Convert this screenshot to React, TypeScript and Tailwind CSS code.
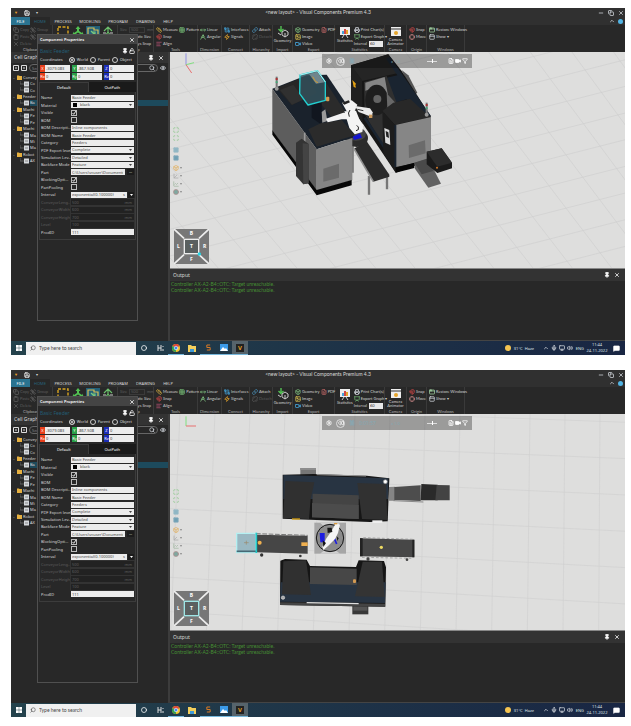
import React, { useId } from "react";
import {
  Circle, Copy, Clipboard, X, Group, Ruler, Magnet, AlignLeft, Grid3x3, MoveHorizontal,
  DraftingCompass, Cable, Zap, Link, Unlink, Box, Image as ImageIcon, Video, FileText, Printer, Presentation,
  Crosshair, AppWindow, PanelTop, Pin, Search, Eye, Settings, Rewind, Pause, Funnel, Save, Minus, ChevronUp,
  Monitor, Volume2, MessageSquare, Unlock, Maximize, Scan, Square, Axis3d, LineChart, Mic,
} from "lucide-react";

type Icon = React.ComponentType<{ className?: string; strokeWidth?: number }>;

function Glyph({ icon: I, className = "text-gray-300" }: { icon: Icon; className?: string }) {
  return <I className={`size-[6px] shrink-0 ${className}`} strokeWidth={3} />;
}

function Tool({ icon, label, tint, dim }: { icon: Icon; label: string; tint?: string; dim?: boolean }) {
  return (
    <button className={`flex h-[7px] items-center gap-px whitespace-nowrap ${dim ? "text-[#5c5c5c]" : "text-[#d0d0d0]"}`}>
      <Glyph icon={icon} className={dim ? "text-[#5c5c5c]" : tint} />
      {label}
    </button>
  );
}

function RibbonGroup({ label, width, children }: { label: string; width: string; children: React.ReactNode }) {
  return (
    <section className={`flex shrink-0 flex-col border-r border-[#3a3a3a] pt-px ${width}`}>
      <div className="flex h-[21px] gap-px px-[2px]">{children}</div>
      <div className="text-center leading-[5px] text-[#b0b0b0]">{label}</div>
    </section>
  );
}

const Col = ({ children, className = "" }: { children: React.ReactNode; className?: string }) => (
  <div className={`flex flex-col ${className}`}>{children}</div>
);

function Ribbon() {
  const id = useId();
  return (
    <div className="flex h-[27px] overflow-hidden bg-[#282828] font-[Lato,'Noto_Sans',sans-serif]">
      <RibbonGroup label="Clipboard" width="w-[42px]">
        <Col className="w-[16px]">
          <Tool icon={Copy} label="Copy" dim />
          <Tool icon={Clipboard} label="Paste" dim />
          <Tool icon={X} label="Delete" dim />
        </Col>
        <Col>
          <Tool icon={Group} label="Group" dim />
          <Tool icon={Group} label="" dim />
        </Col>
      </RibbonGroup>
      <RibbonGroup label="" width="w-[65px]">
        <button aria-label="Select" className="flex w-[16px] justify-center">
          <svg viewBox="0 0 12 12" className="size-[12px]"><rect x="1" y="1" width="10" height="10" fill="none" stroke="#d9a520" strokeWidth="1.4" strokeDasharray="3 1.5" /></svg>
        </button>
        <button aria-label="Move" className="flex w-[15px] justify-center">
          <svg viewBox="0 0 12 12" className="size-[12px]" fill="#52c152"><path d="M6 0 8.500 3H7V5L10 7V5.500L12 9 9 10V8.500L6 6.500 3 8.500V10L0 9 2 5.500V7L5 5V3H3.500Z" /></svg>
        </button>
        <button aria-label="PnP" className="flex h-[20px] w-[14px] justify-center bg-[#23617a]">
          <svg viewBox="0 0 12 12" className="size-[12px]" fill="none" strokeWidth="1.200"><path d="M1 2H7V4H11V10H1Z" stroke="#d7bd55" /><path d="M5 6H8V9M8 9 4 5" stroke="#7cc77c" /></svg>
        </button>
        <button aria-label="Interact" className="flex w-[15px] justify-center">
          <svg viewBox="0 0 12 12" className="size-[12px]" fill="none" strokeWidth="1.200"><path d="M2 5 6 1 10 5M6 2V6L3 10M6 6 9 10" stroke="#6cbf6c" /><path d="M1 7H4M8 7H11" stroke="#ccc" /></svg>
        </button>
      </RibbonGroup>
      <RibbonGroup label="Snap" width="w-[36px]">
        <Col className="w-full text-[#d0d0d0]">
          <label className="flex h-[7px] items-center gap-[2px] text-[#5c5c5c]">
            Size
            <input className="h-[6px] w-[16px] border border-[#3a3a3a] px-px" defaultValue="500" />
            mm
          </label>
          <button className="h-[7px] whitespace-nowrap text-right leading-[7px]">Automatic Size</button>
          <button className="h-[7px] whitespace-nowrap text-right leading-[7px]">Always Snap</button>
        </Col>
      </RibbonGroup>
      <RibbonGroup label="Tools" width="w-[44px]">
        <Col>
          <Tool icon={Ruler} label="Measure" tint="text-[#d9b040]" />
          <Tool icon={Magnet} label="Snap" tint="text-[#d04848]" />
          <Tool icon={AlignLeft} label="Align" tint="text-[#b05070]" />
        </Col>
        <Tool icon={Grid3x3} label="Pattern" tint="text-[#6fae6f]" />
      </RibbonGroup>
      <RibbonGroup label="Dimension" width="w-[24px]">
        <Col>
          <Tool icon={MoveHorizontal} label="Linear" tint="text-[#7fbf7f]" />
          <Tool icon={DraftingCompass} label="Angular" tint="text-[#7fbf7f]" />
        </Col>
      </RibbonGroup>
      <RibbonGroup label="Connect" width="w-[28px]">
        <Col>
          <Tool icon={Cable} label="Interfaces" tint="text-[#45a5dc]" />
          <Tool icon={Zap} label="Signals" tint="text-[#e5a52c]" />
        </Col>
      </RibbonGroup>
      <RibbonGroup label="Hierarchy" width="w-[23px]">
        <Col>
          <Tool icon={Link} label="Attach" tint="text-[#4c91ba]" />
          <Tool icon={Unlink} label="Detach" dim />
        </Col>
      </RibbonGroup>
      <RibbonGroup label="Import" width="w-[20px]">
        <button className="flex w-full flex-col items-center text-[#d0d0d0]">
          <svg viewBox="0 0 12 12" className="size-[12px]" fill="none"><path d="M4 0V5M1.500 3 4 5.500 6.500 3" stroke="#54c254" strokeWidth="1.400" /><path d="M5 6 8 4 11 6V9L8 11 5 9ZM1 7 4 9M8 7V11" stroke="#ccc" /></svg>
          Geometry
        </button>
      </RibbonGroup>
      <RibbonGroup label="Export" width="w-[42px]">
        <Col>
          <Tool icon={Box} label="Geometry" tint="text-[#7fbf7f]" />
          <Tool icon={ImageIcon} label="Image" tint="text-[#d8c050]" />
          <Tool icon={Video} label="Video" tint="text-[#45a5dc]" />
        </Col>
        <Tool icon={FileText} label="PDF" tint="text-[#b06060]" />
      </RibbonGroup>
      <RibbonGroup label="Statistics" width="w-[50px]">
        <button className="flex w-[16px] flex-col items-center text-[#d0d0d0]">
          <svg viewBox="0 0 12 12" className="size-[12px]"><path d="M1 1H11V9H1Z" fill="#eee" /><path d="M3 5H5V8H3Z" fill="#45a5dc" /><path d="M5 3H7V8H5Z" fill="#d04848" /><path d="M7 4H9V8H7Z" fill="#e5a52c" /><path d="M3 12 5 9M9 12 7 9" stroke="#ccc" /></svg>
          Statistics
        </button>
        <Col>
          <Tool icon={Printer} label="Print Chart(s)" />
          <Tool icon={Presentation} label="Export Graph ▾" tint="text-[#6fae6f]" />
          <div className="flex h-[7px] items-center gap-[2px] text-[#d0d0d0]">
            <label htmlFor={id}>Interval</label>
            <input id={id} className="h-[6px] w-[14px] bg-[#e8e8e8] px-px text-[#333]" defaultValue="60" />
          </div>
        </Col>
      </RibbonGroup>
      <RibbonGroup label="Camera" width="w-[22px]">
        <button className="flex w-full flex-col items-center leading-[4px] text-[#d0d0d0]">
          <svg viewBox="0 0 12 12" className="size-[12px] shrink-0"><path d="M1 1H11V10H1Z" fill="#eee" /><path d="M1 3H11" stroke="#333" /><circle cx="6" cy="7" r="2" fill="#e5a52c" /></svg>
          Camera Animator
        </button>
      </RibbonGroup>
      <RibbonGroup label="Origin" width="w-[20px]">
        <Col>
          <Tool icon={Magnet} label="Snap" tint="text-[#d04848]" />
          <Tool icon={Crosshair} label="Move" tint="text-[#c08080]" />
        </Col>
      </RibbonGroup>
      <RibbonGroup label="Windows" width="w-[38px]">
        <Col>
          <Tool icon={AppWindow} label="Restore Windows" tint="text-[#9fcf9f]" />
          <Tool icon={PanelTop} label="Show ▾" />
        </Col>
      </RibbonGroup>
    </div>
  );
}

type TreeRow = { name: string; folder?: boolean; selected?: boolean };
const tree: TreeRow[] = [
  { name: "Convey", folder: true },
  { name: "Co" },
  { name: "Co" },
  { name: "Feeder", folder: true },
  { name: "Ba", selected: true },
  { name: "Machi", folder: true },
  { name: "Pe" },
  { name: "Pe" },
  { name: "Machi", folder: true },
  { name: "Ma" },
  { name: "Mi" },
  { name: "Ma" },
  { name: "Robot", folder: true },
  { name: "AX" },
];

function CellGraph() {
  return (
    <aside className="flex w-[157px] shrink-0 flex-col bg-[#282828] text-[#d8d8d8]">
      <header className="flex h-[11px] items-center bg-[#333] pl-[3px] pr-[4px]">
        <h2 className="text-[5px] leading-[7px]">Cell Graph</h2>
        <button aria-label="Pin" className="ml-auto mr-[4px]"><Glyph icon={Pin} className="fill-white text-white" /></button>
        <button aria-label="Close"><Glyph icon={X} className="text-white" /></button>
      </header>
      <div className="flex h-[10px] items-center gap-[2px] px-[2px]">
        <button aria-label="Collapse all"><svg viewBox="0 0 6 6" className="size-[6px]" fill="none" stroke="#ddd"><path d="M0.500 0.500H5.500V5.500H0.500ZM2 3H4" /></svg></button>
        <button aria-label="Expand all"><svg viewBox="0 0 6 6" className="size-[6px]" fill="none" stroke="#ddd"><path d="M0.500 0.500H5.500V5.500H0.500ZM2 3H4" /></svg></button>
        <div className="flex h-[8px] flex-1 items-center rounded-full border border-[#666] px-[2px]">
          <input aria-label="Search" placeholder="Sea" className="h-[6px] w-full min-w-0" />
          <Glyph icon={Search} />
        </div>
        <Glyph icon={Eye} />
      </div>
      <ul className="mt-px grid h-[90px] auto-rows-fr">
        {tree.map((row, i) => (
          <li key={i} className={`flex items-center gap-px ${row.folder ? "pl-px" : "pl-[9px]"}`}>
            {row.folder && <span className="w-[4px] text-center">-</span>}
            {row.folder ? (
              <svg viewBox="0 0 5 5" className="size-[5px] shrink-0"><path d="M0 0.500H2L2.500 1H5V5H0Z" fill="#e6b040" /></svg>
            ) : (
              <svg viewBox="0 0 9 6" className="h-[6px] w-[9px] shrink-0"><path d="M0 -1V3H4" fill="none" stroke="#777" strokeWidth="0.700" /><rect x="4" y="0.500" width="5" height="5" fill="#d5d8dc" /><path d="M5 3H8" stroke="#888" /></svg>
            )}
            <span className={`flex h-full items-center ${row.selected ? "flex-1 bg-[#1d4a5c]" : ""}`}>{row.name}</span>
          </li>
        ))}
      </ul>
    </aside>
  );
}

type Prop = { label: string; value?: string; kind?: "text" | "select" | "check" | "off" | "file" | "expr"; on?: boolean; unit?: string };
const properties: Prop[] = [
  { label: "Name", value: "Basic Feeder" },
  { label: "Material", value: "black", kind: "select" },
  { label: "Visible", kind: "check", on: true },
  { label: "BOM", kind: "check" },
  { label: "BOM Descripti...", value: "Inline components" },
  { label: "BOM Name", value: "Basic Feeder" },
  { label: "Category", value: "Feeders" },
  { label: "PDF Export level", value: "Complete", kind: "select" },
  { label: "Simulation Lev...", value: "Detailed", kind: "select" },
  { label: "Backface Mode", value: "Feature", kind: "select" },
  { label: "Part", value: "C:\\Users\\vcuser\\Documents\\Vi", kind: "file" },
  { label: "BlockingOpti...", kind: "check", on: true },
  { label: "PartPooling", kind: "check" },
  { label: "Interval", value: "exponential(0.100000)", kind: "expr" },
  { label: "ConveyorLeng...", value: "500", kind: "off", unit: "mm" },
  { label: "ConveyorWidth", value: "600", kind: "off", unit: "mm" },
  { label: "ConveyorHeight", value: "700", kind: "off", unit: "mm" },
  { label: "Level", value: "100", kind: "off" },
  { label: "ProdID", value: "111" },
];

function PropertyRow({ prop }: { prop: Prop }) {
  const id = useId();
  const kind = prop.kind ?? "text";
  const off = kind === "off";
  return (
    <div className="flex min-w-0 items-center">
      <label htmlFor={id} className={`w-[30px] shrink-0 whitespace-nowrap ${off ? "text-[#5e5e5e]" : "text-[#d8d8d8]"}`}>{prop.label}</label>
      {kind === "check" && (
        <span className="grid size-[6px]">
          <input id={id} type="checkbox" defaultChecked={prop.on} className="peer col-start-1 row-start-1 size-[6px] appearance-none border border-[#bbb]" />
          <svg viewBox="0 0 6 6" className="pointer-events-none invisible col-start-1 row-start-1 size-[6px] peer-checked:visible"><path d="M1.500 3 2.700 4.300 5 1" fill="none" stroke="#fff" strokeWidth="0.900" /></svg>
        </span>
      )}
      {kind === "select" && (
        <div className="flex h-[6px] min-w-0 flex-1 items-center bg-[#ececec] pr-[2px] text-[#444]">
          {prop.label === "Material" && <span className="mx-[2px] size-[4px] shrink-0 bg-black" />}
          <select id={id} className="h-[6px] w-full min-w-0 flex-1 appearance-none pl-px leading-[6px]">
            <option>{prop.value}</option>
          </select>
          <svg viewBox="0 0 3 2" className="h-[2px] w-[3px] shrink-0"><path d="M0 0H3L1.500 2Z" fill="#444" /></svg>
        </div>
      )}
      {(kind === "text" || off || kind === "file" || kind === "expr") && (
        <div className={`flex h-[6px] min-w-0 flex-1 items-center pr-[2px] ${off ? "bg-[#222] text-[#5e5e5e] outline outline-[#333]" : "bg-[#ececec] text-[#444]"}`}>
          <input id={id} disabled={off} defaultValue={prop.value} className="h-[6px] w-full min-w-0 flex-1 pl-px" />
          {prop.unit}
          {kind === "expr" && "s"}
        </div>
      )}
      {kind === "file" && <button aria-label="Browse" className="ml-[2px] h-[6px] w-[7px] shrink-0 bg-[#1c1c1c] leading-[4px] text-white">...</button>}
      {kind === "expr" && <button aria-label="Expression" className="ml-px flex size-[6px] shrink-0 items-center justify-center bg-[#1c1c1c]"><svg viewBox="0 0 3 2" className="h-[2px] w-[3px]"><path d="M0 0H3L1.500 2Z" fill="#fff" /></svg></button>}
    </div>
  );
}

function Coord({ axis, value, color }: { axis: string; value: string; color: string }) {
  return (
    <label className="flex h-[7px] min-w-0 items-center bg-[#ececec]">
      <span className={`h-full w-[5px] shrink-0 text-center leading-[7px] text-white ${color}`}>{axis}</span>
      <input defaultValue={value} className="h-[6px] w-full min-w-0 pl-px text-[#444]" />
    </label>
  );
}

function ComponentProperties() {
  const group = useId();
  return (
    <div role="dialog" aria-label="Component Properties" className="absolute left-[26px] top-[26px] h-[287px] w-[101px] border border-[#505050] bg-[#282828] text-[#d8d8d8]">
      <header className="flex h-[9px] items-center justify-between bg-[#444] px-[2px]">
        <h2 className="text-[4px] font-semibold text-white">Component Properties</h2>
        <button aria-label="Close"><Glyph icon={X} className="text-white" /></button>
      </header>
      <div className="flex flex-col px-px pt-[3px]">
        <div className="flex h-[8px] items-center gap-px px-px">
          <h3 className="flex-1 text-[5px] leading-[8px] text-[#235c74]">Basic Feeder</h3>
          <Glyph icon={Pin} className="fill-white text-white" />
          <Glyph icon={Unlock} className="text-white" />
        </div>
        <div className="flex h-[9px] items-center justify-between pl-px pr-[4px]">
          <span className="w-[27px]">Coordinates</span>
          {["World", "Parent", "Object"].map((name, i) => (
            <label key={name} className="flex items-center gap-[2px]">
              <input type="radio" name={group} defaultChecked={i === 0} className="size-[6px] appearance-none rounded-full border border-[#ccc] checked:bg-[#ddd] checked:shadow-[inset_0_0_0_1px_#282828]" />
              {name}
            </label>
          ))}
        </div>
        <div className="mt-px grid grid-cols-3 gap-x-[2px] gap-y-px pl-px pr-[2px]">
          <Coord axis="X" value="-3079.083" color="bg-[#e8401c]" />
          <Coord axis="Y" value="-867.508" color="bg-[#2aa048]" />
          <Coord axis="Z" value="0" color="bg-[#1c2eb8]" />
          <Coord axis="Rx" value="0" color="bg-[#e8401c]" />
          <Coord axis="Ry" value="0" color="bg-[#2aa048]" />
          <Coord axis="Rz" value="0" color="bg-[#1c2eb8]" />
        </div>
        <div className="mt-[2px] flex h-[10px]">
          <button className="flex-1 border border-b-0 border-[#3c3c3c] text-white">Default</button>
          <button className="flex-1 bg-[#1a1a1a] text-white">OutPath</button>
        </div>
        <div className="border border-t-0 border-[#3c3c3c] pb-[3px] pl-px pr-px pt-[2px]">
          <div className="grid h-[142px] auto-rows-fr grid-cols-1">
            {properties.map((p) => <PropertyRow key={p.label} prop={p} />)}
          </div>
        </div>
      </div>
    </div>
  );
}

const Tower = ({ x, y }: { x: number; y: number }) => (
  <g>
    <rect x={x - 3} y={y} width="6" height="36" fill="#777" />
    <rect x={x - 3} y={y + 4} width="6" height="6" fill="#a33" />
    <rect x={x - 3} y={y + 14} width="6" height="5" fill="#4a7" />
    <circle cx={x} cy={y + 36} r="6" fill="#999" />
  </g>
);

function PerspectiveScene() {
  return (
    <svg viewBox="30 8 1365 648" preserveAspectRatio="xMinYMid slice" className="size-full bg-[#dededd]">
      <g stroke="#cfcfcf" strokeWidth="2">
        {Array.from({ length: 15 }, (_, i) => <path key={i} d={`M30 ${60 + i * 80}L1400 ${-290 + i * 80}`} />)}
        {Array.from({ length: 17 }, (_, i) => <path key={i} d={`M${-520 + i * 125} 0L${60 + i * 118} 660`} />)}
      </g>
      <path d="M78 46V12" stroke="#9090e0" strokeWidth="3" />
      <path d="M78 46 102 40" stroke="#80e080" strokeWidth="3" />
      <path d="M78 46 95 71" stroke="#e87070" strokeWidth="3" />

      <path d="M725 62 745 78 772 130 760 140Z" fill="#555" />
      <path d="M573 48 685 15 725 65 813 203V332L707 370 573 170Z" fill="#161616" />
      <path d="M573 48 685 15 712 72 606 95Z" fill="#252525" />
      <path d="M678 28 690 22 813 200 775 207 740 150 705 160 680 85 712 78Z" fill="#1a2430" />
      <path d="M573 48 606 92 608 225 573 170Z" fill="#202020" />
      <path d="M612 98 680 80 710 160 672 185 670 290 614 195Z" fill="#303030" />
      <path d="M616 100 674 83 684 138 655 112 616 124Z" fill="#858585" />
      <ellipse cx="650" cy="152" rx="34" ry="46" fill="#1e1e1e" />
      <circle cx="652" cy="149" r="12" fill="#636363" />
      <path d="M680 132 706 160 682 176Z" fill="#686868" />
      <path d="M614 205 704 340" stroke="#1a2430" strokeWidth="8" />
      <path d="M667 185 700 160 750 148 790 185 813 203 704 226Z" fill="#282828" />
      <path d="M667 185 704 226 707 368 670 312Z" fill="#1d1d1d" />
      <path d="M706 227 813 203V331L708 353Z" fill="#868686" />
      <path d="M706 227V353" stroke="#1a2430" strokeWidth="6" />
      <path d="M707 355 763 340V356L707 370Z" fill="#060606" />
      <path d="M673 236 688 242 691 287 676 280Z" fill="#ddd" />
      <path d="M677 245 685 249 687 266 679 262Z" fill="#222" />
      <path d="M746 288 795 273 797 312 747 326Z" fill="#6b6b6b" />
      <path d="M577 92 588 103 586 108 588 115 581 113Z" fill="#e5a214" />
      <Tower x={800} y={160} />
      <path d="M763 340 805 328 843 403 805 415 765 358Z" fill="#626262" />
      <path d="M763 340 800 328 820 365 785 375Z" fill="#4a4a4a" />
      <path d="M800 307 845 297 876 340V357L832 371 800 345Z" fill="#1b1b1b" />
      <path d="M800 307 845 297 876 340 832 352Z" fill="#2c2c2c" />
      <circle cx="831" cy="355" r="3" fill="#d27a2a" />

      <path d="M627 380V436M681 370V420M578 290V370" stroke="#777" strokeWidth="7" />
      <path d="M582 298 620 276 688 376V382L640 397Z" fill="#2b2b2b" />
      <path d="M582 298 640 397" stroke="#909090" strokeWidth="5" />
      <ellipse cx="590" cy="266" rx="34" ry="27" fill="#2b2b2b" />
      <ellipse cx="588" cy="254" rx="30" ry="20" fill="#444" />

      <path d="M337 118 440 78 500 76 600 225 578 265 470 300Z" fill="#1a222c" />
      <path d="M337 118 470 300V424L337 244Z" fill="#5d5d5d" />
      <path d="M470 300 577 266V393L470 424Z" fill="#858585" />
      <path d="M337 243 470 422 575 392V408L470 438 337 256Z" fill="#080808" />
      <path d="M350 116 435 82 470 130 395 168Z" fill="#262626" />
      <path d="M360 122 400 106 432 150 396 166Z" fill="#303030" />
      <path d="M495 95 556 188 520 210 480 160Z" fill="#2b2b2b" />
      <path d="M455 165 485 160V226L455 205Z" fill="#11161f" />
      <path d="M485 188 496 180 502 215 487 220Z" fill="#9a9a9a" />
      <path d="M445 240 482 222 545 212 585 258 470 292Z" fill="#2b2b2b" />
      <path d="M434 250V280" stroke="#999" strokeWidth="5" />
      <path d="M408 280 425 268 446 284V402L430 405 408 380Z" fill="#343434" />
      <path d="M428 282 446 284V402L430 405Z" fill="#444" />
      <path d="M490 358 537 343V385L490 397Z" fill="#6b6b6b" />
      <Tower x={350} y={82} />

      <path d="M420 77 472 64 496 98V153L444 167 419 133Z" fill="#34505a" fillOpacity=".85" stroke="#22cfd0" strokeWidth="4" strokeLinejoin="round" />
      <path d="M447 74 472 67 493 99 468 103Z" fill="#6f858d" />
      <path d="M458 82 466 96 474 100" stroke="#d09a30" strokeWidth="3" fill="none" />
      <path d="M420 77 472 64 496 98" stroke="#b7eef0" strokeWidth="3" fill="none" />
      <rect x="498" y="142" width="10" height="14" rx="3" fill="#d39a52" />

      <path d="M578 262 600 252 606 265 582 272Z" fill="#1414d0" />
      <path d="M498 208 550 190 578 194 584 210 545 210 503 219Z" fill="#f2f2f2" />
      <path d="M546 160 575 153 592 166 583 188 560 186Z" fill="#f4f4f4" />
      <path d="M546 160 566 153 570 159 553 166Z" fill="#222" />
      <path d="M585 170 630 177 638 189 636 202 622 198 596 188Z" fill="#ececec" />
      <path d="M553 186 588 184 598 210 610 228 607 248 584 255 568 236Z" fill="#f4f4f4" />
      <path d="M570 182Q562 190 568 202M590 228Q598 232 595 241L588 244" fill="none" stroke="#222" strokeWidth="3" />
      <path d="M592 180 610 184" stroke="#333" strokeWidth="3" />
      <rect x="627" y="196" width="10" height="10" fill="#c9975a" />
    </svg>
  );
}

function TopScene() {
  return (
    <svg viewBox="-270 -135 1365 648" preserveAspectRatio="xMinYMid slice" className="size-full bg-[#dededd]">
      <g stroke="#d0d0d0" strokeWidth="2">
        {Array.from({ length: 8 }, (_, i) => <path key={i} d={`M-270 ${-160 + i * 103}L1100 ${-110 + i * 109}`} />)}
        {Array.from({ length: 14 }, (_, i) => <path key={i} d={`M${-240 + i * 105} -140L${-268 + i * 107} 520`} />)}
      </g>
      <path d="M-222 -99V-128" stroke="#80e080" strokeWidth="3" />
      <path d="M-222 -99H-192" stroke="#e87070" strokeWidth="3" />

      <path d="M121 27H168V50H121Z" fill="#777" />
      <path d="M121 27H168V33H121Z" fill="#8c8c8c" />
      <path d="M160 45 320 50 388 58 383 187 330 189 68 179V47Z" fill="#161616" />
      <path d="M70 48 385 58 384 120H70Z" fill="#283442" />
      <path d="M170 47 318 51" stroke="#999" strokeWidth="3" />
      <path d="M158 104 296 109V180L156 175Z" fill="#444" />
      <path d="M156 132 296 138V180L156 175Z" fill="#4c4c4c" />
      <path d="M76 66 163 70 152 120 147 180 69 177Z" fill="#303030" />
      <path d="M292 72 378 75 382 183 306 180Z" fill="#313131" />
      <path d="M96 180H120" stroke="#d5a014" strokeWidth="4" />
      <circle cx="376" cy="68" r="6" fill="#fff" stroke="#888" strokeWidth="2" />
      <rect x="337" y="184" width="30" height="8" fill="#eee" />
      <path d="M387 84 405 83V125H387Z" fill="#858585" />
      <path d="M403 84 482 79V126L403 123Z" fill="#4d4d4d" />
      <path d="M484 75 533 77V124H482Z" fill="#2a2a2a" />
      <path d="M530 78 569 79V124H526Z" fill="#434343" />
      <path d="M400 125 490 129" stroke="#888" strokeWidth="3" />

      <path d="M-12 227 143 230V284L-12 280Z" fill="#464646" />
      <path d="M-12 224 143 229" stroke="#777" strokeWidth="3" strokeDasharray="14 5" />
      <circle cx="5" cy="288" r="5" fill="#333" /><circle cx="121" cy="291" r="4" fill="#333" />
      <circle cx="-1" cy="251" r="6" fill="#efb050" />
      <path d="M124 250H143V261H124Z" fill="#efb050" />
      <path d="M-70 223H-12V281H-70Z" fill="#9ab8c2" stroke="#b4f0f2" strokeWidth="4" />
      <path d="M-70 277H-12" stroke="#456975" strokeWidth="5" />
      <path d="M-11 221V282" stroke="#22c8c8" strokeWidth="5" />
      <path d="M-48 251H-34M-41 245V257" stroke="#9a8a6a" strokeWidth="2" />

      <path d="M163 191H258V284H163Z" fill="#a6a6a6" />
      <path d="M180 191H240L225 205H195ZM180 284H240L225 272H195Z" fill="#d0d0d0" />
      <circle cx="210" cy="237" r="41" fill="#8b8b8b" stroke="#151515" strokeWidth="3" />
      <path d="M179 222H194V250H181Z" fill="#1c1ce0" />
      <path d="M222 236 230 255" stroke="#1c1ce0" strokeWidth="5" />
      <path d="M228 192 240 197 234 222 225 240 205 260 190 273 187 263 198 240 215 215Z" fill="#f5f5f5" />
      <path d="M202 206 215 206 217 219 203 222ZM188 244 198 252 190 264ZM230 232 236 238 232 246Z" fill="#151515" />
      <path d="M222 194H232" stroke="#d99a40" strokeWidth="4" />

      <path d="M300 238 463 242V295L300 292Z" fill="#474747" />
      <path d="M300 238H308V292H300ZM457 242H463V295H457Z" fill="#222" />
      <path d="M310 236 460 241M306 295 460 298" stroke="#888" strokeWidth="2" strokeDasharray="8 6" />
      <circle cx="364" cy="265" r="5" fill="#eedb62" />
      <circle cx="324" cy="300" r="5" fill="#444" /><circle cx="441" cy="302" r="4" fill="#444" />

      <path d="M277 438H325V466H277Z" fill="#383838" />
      <path d="M280 440H322V455H280Z" fill="#555" />
      <path d="M61 305 75 300 140 302 150 321 288 324 296 304 372 306 378 325 376 443 60 438Z" fill="#151515" />
      <path d="M62 370H377L375 432 60 428Z" fill="#283442" />
      <path d="M150 325 290 329V378L150 375Z" fill="#474747" />
      <path d="M70 307 138 304 153 408 66 406Z" fill="#303030" />
      <path d="M308 308 366 308 374 414 285 412Z" fill="#343434" />
      <path d="M60 430 375 434V443L60 438Z" fill="#444" />
      <path d="M140 431 296 434" stroke="#ddd" strokeWidth="4" />
      <circle cx="69" cy="416" r="5" fill="#aaa" stroke="#ddd" strokeWidth="2" />
      <rect x="279" y="361" width="9" height="11" rx="3" fill="#d39a52" />
    </svg>
  );
}

function NavCube({ top }: { top: boolean }) {
  return (
    <svg viewBox="0 0 105 105" className="absolute bottom-[4px] left-[4px] size-[35px]">
      <path d="M0 0H105V105H0Z" fill="#777" />
      <path d="M0 0 30 28M105 0 75 28M0 105 30 77M105 105 75 77" stroke="#ededed" strokeWidth="5" />
      <rect x="31" y="31" width="43" height="43" fill="#5a6060" stroke={top ? "#9fe6e6" : "#ededed"} strokeWidth="4" />
      {!top && <circle cx="76" cy="75" r="5" fill="#22d6e6" />}
      <g fill="#fff" fontSize="15" fontWeight="700" fontFamily="Noto Sans, sans-serif" textAnchor="middle">
        <text x="52" y="18">B</text><text x="13" y="58">L</text><text x="52" y="58">T</text><text x="92" y="58">R</text><text x="52" y="97">F</text>
      </g>
    </svg>
  );
}

const viewTools: { name: string; icon: Icon; style: string }[] = [
  { name: "Fit all", icon: Maximize, style: "text-[#8cc98c]" },
  { name: "Fit selected", icon: Scan, style: "text-[#8cc98c] mb-[4px]" },
  { name: "Grid", icon: Square, style: "text-[#9fbfca] fill-[#8fb6c4]" },
  { name: "Floor", icon: Square, style: "text-[#8fb2c0] fill-[#6fa0b4] mb-[2px]" },
  { name: "Render mode", icon: Box, style: "text-[#e2b060]" },
  { name: "Frames", icon: Axis3d, style: "text-[#a8a8a8]" },
  { name: "Charts", icon: LineChart, style: "text-[#a3b8a3]" },
  { name: "Lighting", icon: Circle, style: "text-[#b08f8f] fill-[#80a8a0]" },
];

function Viewport({ top }: { top: boolean }) {
  return (
    <div className="relative h-[217px] border-b border-[#888]">
      {top ? <TopScene /> : <PerspectiveScene />}
      <div className="absolute right-[153px] top-[2px] flex h-[14px] w-[150px] items-center gap-[4px] bg-black/30 px-[4px] text-[#84a8b4]">
        <button aria-label="Settings"><Glyph icon={Settings} className="text-white" /></button>
        <button aria-label="Reset" className="flex size-[9px] items-center justify-center rounded-full border border-[#ddd]"><Glyph icon={Rewind} className="text-white" /></button>
        <button aria-label="Play"><Glyph icon={Pause} className="text-[#84a8b4]" /></button>
        <span className="w-[28px] text-[5px]">{top ? "0:01:57" : ""}</span>
        <span className="w-[14px]">x 1.0</span>
        <input aria-label="Simulation speed" type="range" defaultValue="85" className="h-[5px] w-[28px] appearance-none bg-[linear-gradient(#ddd,#ddd)] bg-[length:10px_1px] bg-right bg-no-repeat [&::-webkit-slider-thumb]:h-[4px] [&::-webkit-slider-thumb]:w-px [&::-webkit-slider-thumb]:appearance-none [&::-webkit-slider-thumb]:bg-white" />
        <div className="ml-auto flex gap-px">
          <Glyph icon={FileText} className="text-white" />
          <Glyph icon={Video} className="fill-white text-white" />
          <Glyph icon={Funnel} className="text-white" />
        </div>
      </div>
      <div className="absolute left-[3px] top-[75px] flex flex-col gap-[2px]">
        {viewTools.map((t, i) => (
          <button key={t.name} aria-label={t.name} className="flex items-start">
            <Glyph icon={t.icon} className={t.style} />
            {i > 3 && <svg viewBox="0 0 2 6" className="ml-px h-[6px] w-[2px]"><path d="M0 2H2L1 4Z" fill="#888" /></svg>}
          </button>
        ))}
      </div>
      <NavCube top={top} />
    </div>
  );
}

function Taskbar() {
  return (
    <footer className="flex h-[14px] items-center bg-linear-to-r from-[#24424c] to-[#192643] text-[#dfe5ea]">
      <button aria-label="Start" className="flex w-[15px] justify-center">
        <svg viewBox="0 0 6 6" className="size-[6px]" fill="#fff"><path d="M0 0H2.800V2.800H0ZM3.200 0H6V2.800H3.200ZM0 3.200H2.800V6H0ZM3.200 3.200H6V6H3.200Z" /></svg>
      </button>
      <div className="flex h-[13px] w-[110px] items-center gap-[3px] bg-[#f0f0f0] px-[4px]">
        <Search className="size-[6px] -scale-x-100 text-[#333]" />
        <input aria-label="Type here to search" placeholder="Type here to search" className="h-[8px] min-w-0 flex-1 font-[Lato,sans-serif] text-[5px] text-[#444] placeholder:text-[#444]" />
      </div>
      <div className="flex h-full [&>button]:flex [&>button]:w-[16px] [&>button]:items-center [&>button]:justify-center">
        <button aria-label="Cortana"><Glyph icon={Circle} className="text-white" /></button>
        <button aria-label="Task view"><svg viewBox="0 0 7 6" className="h-[6px] w-[7px]" stroke="#ddd" fill="none"><path d="M1 0V6M1 3H4M4 0V6M6 1V2M6 4V6" /></svg></button>
        <button aria-label="Chrome" className="border-b border-[#77b8dd]">
          <svg viewBox="0 0 8 8" className="size-[8px]"><circle cx="4" cy="4" r="4" fill="#f4c430" /><path d="M4 4 0.500 2A4 4 0 0 1 7.500 2Z" fill="#dc4437" /><path d="M4 4 0.500 2A4 4 0 0 0 4 8Z" fill="#2c9f50" /><circle cx="4" cy="4" r="1.800" fill="#4285f4" stroke="#fff" strokeWidth=".6" /></svg>
        </button>
        <button aria-label="Explorer"><svg viewBox="0 0 8 7" className="h-[7px] w-[8px]"><path d="M0 0H3L4 1H8V7H0Z" fill="#f4cf5c" /><path d="M2 4H6V7H2Z" fill="#3f9ad8" /></svg></button>
        <button aria-label="Sublime Text" className="border-b border-[#77b8dd]"><svg viewBox="0 0 6 8" className="h-[7px] w-[5px]"><path d="M5 1H1V4M1 4H5V7H1" fill="none" stroke="#d87a26" strokeWidth="1.200" /></svg></button>
        <button aria-label="Photos" className="border-b border-[#77b8dd]"><svg viewBox="0 0 8 7" className="h-[7px] w-[8px]"><path d="M0 0H8V7H0Z" fill="#3b9bea" /><path d="M0 7 3 3 5 5 6 4 8 7Z" fill="#fff" /></svg></button>
        <button aria-label="Visual Components" className="border-b border-[#77b8dd] bg-[#56646c]"><span className="flex size-[8px] items-center justify-center bg-[#222] text-[6px] font-bold leading-[8px] text-[#e9a229]">V</span></button>
      </div>
      <div className="ml-auto flex items-center gap-[2px] pr-[5px]">
        <span className="size-[6px] rounded-full bg-[#f5c451]" />
        <span className="w-[28px] whitespace-nowrap pl-px">31°C&nbsp; Haze</span>
        <Glyph icon={ChevronUp} />
        <Glyph icon={Mic} />
        <Glyph icon={Monitor} />
        <Glyph icon={Volume2} />
        <span className="pl-px">ENG</span>
        <time className="w-[22px] text-center leading-[6px]">11:44<br />24-11-2022</time>
        <MessageSquare className="ml-[3px] size-[7px] fill-white text-white" />
      </div>
    </footer>
  );
}

function AppFrame({ top }: { top: boolean }) {
  return (
    <section className="relative flex flex-col overflow-hidden bg-[#282828] text-[4px] leading-[5px]">
      <header className="grid h-[9px] grid-cols-[1fr_auto_1fr] items-center bg-[#303030] text-[#d8d8d8]">
        <div className="flex items-center gap-[6px] pl-[3px]">
          <span className="font-bold text-[#eea32b]">▼</span>
          <Glyph icon={Save} className="text-white" />
          <span>▾</span>
        </div>
        <h1 className="font-[Lato,sans-serif] text-[5px]">&lt;new layout&gt; - Visual Components Premium 4.3</h1>
        <div className="flex justify-end gap-[4px] pr-px">
          <button aria-label="Minimize"><Glyph icon={Minus} /></button>
          <button aria-label="Restore"><Glyph icon={Copy} /></button>
          <button aria-label="Close"><Glyph icon={X} /></button>
        </div>
      </header>
      <nav className="flex h-[8px] items-center bg-[#303030] text-[#d8d8d8]">
        <button className="h-full w-[19px] bg-[#2a7390] text-white">FILE</button>
        <button className="h-full w-[20px] bg-[#282828] text-[#27637c]">HOME</button>
        <button className="w-[26px]">PROCESS</button>
        <button className="w-[28px]">MODELING</button>
        <button className="w-[28px]">PROGRAM</button>
        <button className="w-[27px]">DRAWING</button>
        <button className="w-[18px]">HELP</button>
        <div className="ml-auto flex items-center gap-[3px] pr-[2px]">
          <Glyph icon={ChevronUp} />
          <span className="size-[5px] rounded-full bg-[#52b4e4]" />
        </div>
      </nav>
      <Ribbon />
      <main className="flex">
        <CellGraph />
        <div className="w-[2px] shrink-0 bg-[#3c3c3c]" />
        <div className="flex min-w-0 flex-1 flex-col">
          <Viewport top={top} />
          <div className="h-[72px] border-b border-[#444]">
            <header className="flex h-[12px] items-center gap-[4px] bg-[#333] px-[3px] pr-[5px] text-[#d8d8d8]">
              <h2 className="flex-1 text-[5px]">Output</h2>
              <Glyph icon={Pin} className="fill-white text-white" />
              <Glyph icon={X} className="text-white" />
            </header>
            <div className="px-px font-[Lato,sans-serif] text-[5px] leading-[6px] text-[#469034]">
              <p>Controller AX-A2-B4::OTC: Target unreachable.</p>
              <p>Controller AX-A2-B4::OTC: Target unreachable.</p>
            </div>
          </div>
        </div>
      </main>
      <Taskbar />
      <ComponentProperties />
    </section>
  );
}

export default function App() {
  return (
    <div className="flex flex-col gap-[15px] bg-white pb-[9px] pl-[11px] pr-[6px] pt-[8px] font-['Noto_Sans','Open_Sans',sans-serif]">
      <AppFrame top={false} />
      <AppFrame top />
    </div>
  );
}
